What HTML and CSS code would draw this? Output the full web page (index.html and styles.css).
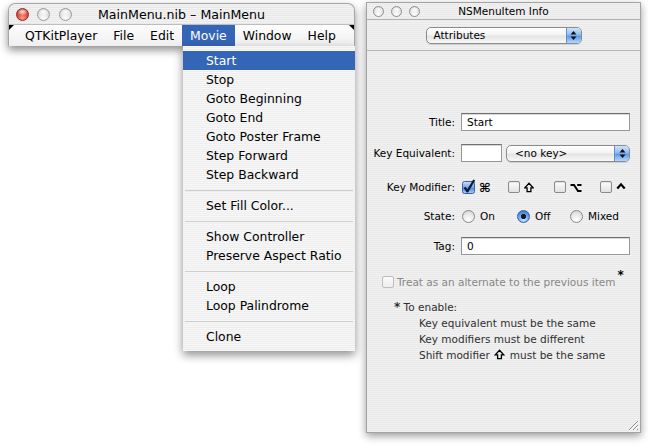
FILE: index.html
```html
<!DOCTYPE html>
<html>
<head>
<meta charset="utf-8">
<title>MainMenu.nib</title>
<link rel="stylesheet" href="styles.css">
</head>
<body>
<div class="desktop">
  <div class="win-main">
    <div class="titlebar">
      <div class="lights">
        <span class="light red"></span>
        <span class="light"></span>
        <span class="light"></span>
      </div>
      <div class="title">MainMenu.nib – MainMenu</div>
      <div></div>
    </div>
    <div class="menubar">
      <span class="mb-item">QTKitPlayer</span>
      <span class="mb-item">File</span>
      <span class="mb-item">Edit</span>
      <span class="mb-item active">Movie</span>
      <span class="mb-item">Window</span>
      <span class="mb-item">Help</span>
    </div>
  </div>

  <div class="dropdown">
    <div class="mi active">Start</div>
    <div class="mi">Stop</div>
    <div class="mi">Goto Beginning</div>
    <div class="mi">Goto End</div>
    <div class="mi">Goto Poster Frame</div>
    <div class="mi">Step Forward</div>
    <div class="mi">Step Backward</div>
    <div class="sep"></div>
    <div class="mi">Set Fill Color...</div>
    <div class="sep"></div>
    <div class="mi">Show Controller</div>
    <div class="mi">Preserve Aspect Ratio</div>
    <div class="sep"></div>
    <div class="mi">Loop</div>
    <div class="mi">Loop Palindrome</div>
    <div class="sep"></div>
    <div class="mi">Clone</div>
  </div>

  <div class="win-info">
    <div class="info-title">
      <div class="slights">
        <span class="slight"></span>
        <span class="slight"></span>
        <span class="slight"></span>
      </div>
      <div class="ititle">NSMenuItem Info</div>
      <div></div>
    </div>
    <div class="info-toolbar">
      <div class="popup wide">
        <span class="ptext">Attributes</span>
        <span class="cap"><svg width="7" height="11" viewBox="0 0 7 11"><polygon points="3.5,1 6.5,4.5 0.5,4.5" fill="#111"/><polygon points="0.5,6.5 6.5,6.5 3.5,10" fill="#111"/></svg></span>
      </div>
    </div>
    <div class="info-body">
      <div class="row r-title">
        <span class="lbl">Title:</span>
        <div class="field">Start</div>
      </div>
      <div class="row r-key">
        <span class="lbl">Key Equivalent:</span>
        <div class="field small"></div>
        <div class="popup key">
          <span class="ptext">&lt;no key&gt;</span>
          <span class="cap"><svg width="7" height="11" viewBox="0 0 7 11"><polygon points="3.5,1 6.5,4.5 0.5,4.5" fill="#111"/><polygon points="0.5,6.5 6.5,6.5 3.5,10" fill="#111"/></svg></span>
        </div>
      </div>
      <div class="row r-mod">
        <span class="lbl">Key Modifier:</span>
        <div class="mods">
          <div class="mg">
            <svg class="cbx" width="13" height="13" viewBox="0 0 13 13">
              <defs><linearGradient id="cbg" x1="0" y1="0" x2="0" y2="1"><stop offset="0" stop-color="#cfe3fb"/><stop offset="0.5" stop-color="#6fa6ec"/><stop offset="0.55" stop-color="#4d8ce6"/><stop offset="1" stop-color="#a9d2fc"/></linearGradient></defs>
              <rect x="0.5" y="0.5" width="12" height="12" rx="2" fill="url(#cbg)" stroke="#3f629f"/>
              <path d="M2.6 6.4 L5.4 10.4 L12.2 -1" fill="none" stroke="#0f1b33" stroke-width="2.3" stroke-linejoin="round"/>
            </svg>
            <span class="glyph">⌘</span>
          </div>
          <div class="mg">
            <span class="cb"></span>
            <svg width="10" height="11" viewBox="0 0 10 11"><path d="M5 1.2 L9.2 5.8 H6.9 V9.6 H3.1 V5.8 H0.8 Z" fill="none" stroke="#000" stroke-width="1.3" stroke-linejoin="miter"/></svg>
          </div>
          <div class="mg">
            <span class="cb"></span>
            <svg width="12" height="11" viewBox="0 0 12 11"><path d="M0.5 3 H4 L8 9 H11.5 M7.2 3 H11.5" fill="none" stroke="#000" stroke-width="2"/></svg>
          </div>
          <div class="mg">
            <span class="cb"></span>
            <svg width="10" height="11" viewBox="0 0 10 11"><path d="M1.3 6.5 L5 2.3 L8.7 6.5" fill="none" stroke="#000" stroke-width="2.2"/></svg>
          </div>
        </div>
      </div>
      <div class="row r-state">
        <span class="lbl">State:</span>
        <div class="states">
          <div class="sg"><span class="rb"></span><span>On</span></div>
          <div class="sg"><span class="rb on"></span><span>Off</span></div>
          <div class="sg"><span class="rb"></span><span>Mixed</span></div>
        </div>
      </div>
      <div class="row r-tag">
        <span class="lbl">Tag:</span>
        <div class="field">0</div>
      </div>
      <div class="row r-alt">
        <span class="cb dis"></span>
        <span class="alt-text">Treat as an alternate to the previous item</span><span class="star sup">*</span>
      </div>
      <div class="notes">
        <div><span class="star">*</span> To enable:</div>
        <div class="ln">Key equivalent must be the same</div>
        <div class="ln">Key modifiers must be different</div>
        <div class="ln">Shift modifier<svg class="inl" width="11" height="11" viewBox="0 0 10 11"><path d="M5 1.2 L9.2 5.8 H6.9 V9.6 H3.1 V5.8 H0.8 Z" fill="none" stroke="#000" stroke-width="1.3"/></svg>must be the same</div>
      </div>
    </div>
    <svg class="grip" width="12" height="12" viewBox="0 0 12 12">
      <path d="M11 2 L2 11 M11 6 L6 11 M11 10 L10 11" stroke="#8c8c8c" stroke-width="1"/>
      <path d="M11.8 2.8 L2.8 11.8 M11.8 6.8 L6.8 11.8" stroke="#ffffff" stroke-width="1"/>
    </svg>
  </div>
</div>
</body>
</html>
```

FILE: styles.css
```css
* { box-sizing: border-box; }
html, body { margin: 0; padding: 0; }
body {
  width: 648px;
  height: 446px;
  overflow: hidden;
  background: #ffffff;
  font-family: "DejaVu Sans", sans-serif;
  color: #000;
}
.desktop { position: relative; width: 648px; height: 446px; }

/* ---------- main window ---------- */
.win-main {
  position: absolute;
  left: 8px;
  top: 3px;
  width: 347px;
  border-radius: 7px 7px 0 0;
  box-shadow: 0 4px 9px rgba(0, 0, 0, 0.45);
  z-index: 1;
}
.titlebar {
  height: 21px;
  display: grid;
  grid-template-columns: 1fr auto 1fr;
  align-items: center;
  border: 1px solid #a6a6a6;
  border-bottom: none;
  border-radius: 7px 7px 0 0;
  background: repeating-linear-gradient(#f3f3f3 0 1px, #e8e8e8 1px 2px);
}
.lights { display: flex; gap: 8.5px; padding-left: 6.5px; }
.light {
  width: 13px;
  height: 13px;
  border-radius: 50%;
  border: 1px solid #9b9b9b;
  background:
    radial-gradient(ellipse 55% 35% at 50% 25%, rgba(255,255,255,0.95), rgba(255,255,255,0) 100%),
    radial-gradient(circle at 50% 80%, #ffffff 0, #e2e2e2 50%, #bdbdbd 100%);
}
.light.red {
  border-color: #8c2a20;
  background:
    radial-gradient(ellipse 55% 35% at 50% 25%, rgba(255,255,255,0.9), rgba(255,255,255,0) 100%),
    radial-gradient(circle at 50% 80%, #ff9b8a 0, #db3f30 55%, #a21e14 100%);
}
.title { font-size: 12.6px; white-space: nowrap; }

.menubar {
  position: relative;
  height: 22px;
  display: flex;
  align-items: stretch;
  padding-left: 8px;
  border: 1px solid #a6a6a6;
  border-top-color: #bdbdbd;
  border-bottom: none;
  background: linear-gradient(#fdfdfd, #efefef);
  font-size: 12.4px;
}
.menubar::before,
.menubar::after {
  content: "";
  position: absolute;
  top: 0;
  width: 0;
  height: 0;
}
.menubar::before { left: 0; border-top: 5px solid #000; border-right: 5px solid transparent; }
.menubar::after { right: 0; border-top: 5px solid #000; border-left: 5px solid transparent; }
.mb-item { display: flex; align-items: center; padding: 0 8px; white-space: nowrap; }
.mb-item.active { background: #3565b7; color: #fff; }

/* ---------- dropdown ---------- */
.dropdown {
  position: absolute;
  left: 183px;
  top: 46px;
  width: 172px;
  padding: 5px 0;
  background: repeating-linear-gradient(#f7f7f7 0 1px, #eeeeee 1px 2px);
  box-shadow: 0 4px 9px rgba(0, 0, 0, 0.45);
  font-size: 12.4px;
  z-index: 2;
}
.mi { height: 19px; line-height: 19px; padding-left: 23px; white-space: nowrap; }
.mi.active { background: #3565b7; color: #fff; }
.sep { height: 1px; margin: 6px 2px 5px; background: #cdcdcd; }

/* ---------- info panel ---------- */
.win-info {
  position: absolute;
  left: 366px;
  top: 2px;
  width: 275px;
  height: 431px;
  border: 1px solid #a3a3a3;
  background: repeating-linear-gradient(#f1f1f1 0 1px, #e9e9e9 1px 2px);
  box-shadow: 0 3px 8px rgba(0, 0, 0, 0.4);
  display: flex;
  flex-direction: column;
  font-size: 10.5px;
}
.info-title {
  height: 17px;
  flex: none;
  border-bottom: 1px solid #b3b3b3;
  display: grid;
  grid-template-columns: 1fr auto 1fr;
  align-items: center;
}
.slights { display: flex; gap: 7px; padding-left: 6px; }
.slight {
  width: 11px;
  height: 11px;
  border-radius: 50%;
  border: 1px solid #8e8e8e;
  background:
    radial-gradient(ellipse 55% 35% at 50% 25%, rgba(255,255,255,0.95), rgba(255,255,255,0) 100%),
    radial-gradient(circle at 50% 80%, #ffffff 0, #e3e3e3 55%, #c2c2c2 100%);
}
.ititle { font-size: 10.5px; white-space: nowrap; }
.info-toolbar {
  height: 31px;
  flex: none;
  border-bottom: 1px solid #b3b3b3;
  display: flex;
  justify-content: center;
  align-items: center;
}

.popup {
  height: 17px;
  border: 1px solid #8c8c8c;
  border-radius: 5px;
  background: linear-gradient(#ffffff, #f3f3f3 45%, #e4e4e4 55%, #f8f8f8);
  display: flex;
  align-items: center;
  justify-content: space-between;
  overflow: hidden;
  box-shadow: 0 1px 1px rgba(0, 0, 0, 0.12);
}
.popup.wide { width: 156px; }
.popup.key { flex: 1; margin-right: 10px; }
.ptext { padding-left: 7px; white-space: nowrap; }
.popup.key .ptext { padding-left: 8px; }
.cap {
  width: 15px;
  align-self: stretch;
  border-left: 1px solid #6b8cc2;
  background: linear-gradient(#cfe3fb, #8fbdf2 45%, #5e9ae9 55%, #b4d8fd);
  display: flex;
  align-items: center;
  justify-content: center;
}

.info-body { flex: 1; padding-top: 62px; }
.row { display: flex; align-items: center; white-space: nowrap; }
.lbl { width: 88px; flex: none; text-align: right; margin-right: 6px; }
.r-title { height: 18px; }
.r-key { height: 18px; margin-top: 13px; }
.r-mod { height: 14px; margin-top: 18px; }
.r-state { height: 14px; margin-top: 15px; }
.r-tag { height: 18px; margin-top: 14px; }
.r-alt { height: 14px; margin-top: 20px; padding-left: 15px; gap: 3px; }

.field {
  flex: 1;
  height: 18px;
  margin-right: 10px;
  border: 1px solid #979797;
  border-top-color: #707070;
  background: #fff;
  box-shadow: inset 0 1px 0 #d9d9d9;
  padding-left: 5px;
  display: flex;
  align-items: center;
}
.field.small { flex: none; width: 41px; margin-right: 4px; }

.cb {
  width: 12px;
  height: 12px;
  flex: none;
  border: 1px solid #8a8a8a;
  border-radius: 2px;
  background: linear-gradient(#fdfdfd, #e2e2e2);
  box-shadow: inset 0 1px 1px rgba(0, 0, 0, 0.1);
}
.cb.dis { border-color: #bdbdbd; background: linear-gradient(#fbfbfb, #ededed); box-shadow: none; }
.cbx { overflow: visible; flex: none; }

.mods { display: grid; grid-template-columns: repeat(4, 46px); padding-left: 1px; }
.mg { display: flex; align-items: center; gap: 4px; }
.glyph { font-size: 12.5px; font-weight: bold; }

.states { display: grid; grid-template-columns: 55px 53px auto; padding-left: 1px; }
.sg { display: flex; align-items: center; gap: 5px; }
.rb {
  width: 13px;
  height: 13px;
  flex: none;
  border-radius: 50%;
  border: 1px solid #8a8a8a;
  background: radial-gradient(circle at 50% 80%, #ffffff, #e8e8e8 55%, #cdcdcd);
}
.rb.on {
  border-color: #3b5d9a;
  background:
    radial-gradient(circle at 50% 50%, #0f1c36 0 2.3px, rgba(0,0,0,0) 2.9px),
    radial-gradient(circle at 50% 80%, #cfe6ff, #66a1ea 55%, #2c64c2);
}

.alt-text { color: #878787; }
.star { font-weight: bold; font-size: 12px; }
.sup { align-self: flex-start; margin-top: -7px; margin-left: -1px; }

.notes { margin-top: 10px; line-height: 16px; padding-left: 27px; color: #303030; }
.notes .ln { padding-left: 25px; }
.inl { vertical-align: -1px; margin: 0 5px 0 4px; }

.grip { position: absolute; right: 1px; bottom: 1px; }
```
